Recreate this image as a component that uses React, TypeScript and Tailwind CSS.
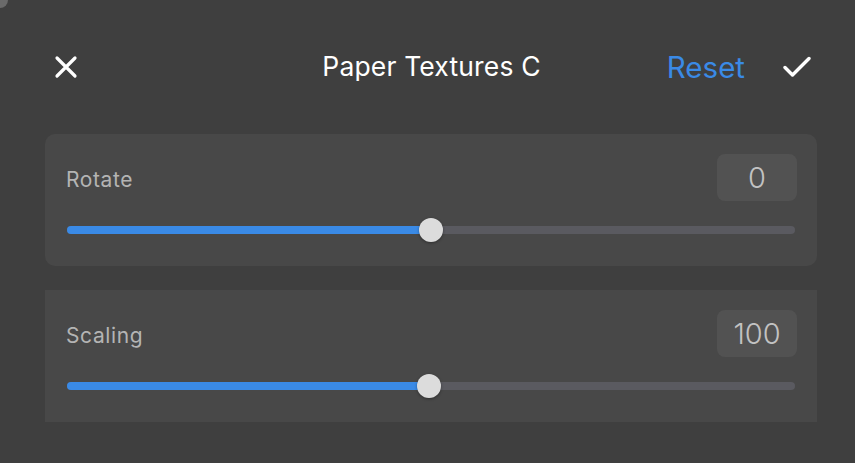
import { FC } from 'react';

type SliderCardProps = {
  label: string;
  value: number;
  percent: number;
  rounded?: boolean;
};

const SliderCard: FC<SliderCardProps> = ({ label, value, percent, rounded }) => {
  return (
    <div className={`bg-[#484848] pt-5 pb-6 pl-[21px] pr-5 ${rounded ? 'rounded-[10px]' : ''}`}>
      <div className="flex items-center justify-between h-[47px]">
        <div className="text-[21px] text-[#b4b4b4] tracking-[0.6px] pt-1">{label}</div>
        <div className="w-20 h-[47px] rounded-lg bg-[#525252] flex items-center justify-center text-[29px] font-light text-[#c2c2c2]">
          {value}
        </div>
      </div>
      <div className="relative h-6 mt-[17px] ml-px mr-0.5 flex items-center">
        <div className="w-full h-2 rounded-full bg-[#5a5a60]" />
        <div
          className="absolute left-0 h-2 rounded-full bg-[#3a8ae6]"
          style={{ width: `${percent}%` }}
        />
        <div
          className="absolute w-6 h-6 -ml-3 rounded-full bg-[#dcdcdc] shadow-[0_1px_3px_rgba(0,0,0,0.35)]"
          style={{ left: `${percent}%` }}
        />
      </div>
    </div>
  );
};

export default function App() {
  return (
    <div
      className="w-[855px] h-[463px] bg-[#3f3f3f] overflow-hidden relative"
      style={{ fontFamily: 'Inter, "Noto Sans", sans-serif' }}
    >
      <div className="absolute top-0 left-0 w-2 h-2 bg-[#6a6a6a] rounded-br-[8px]" />
      <div className="grid grid-cols-[1fr_auto_1fr] items-center h-[134px] pl-[52px] pr-[44px]">
        <button className="w-7 h-7 flex items-center justify-center">
          <svg width="24" height="24" viewBox="0 0 24 24" fill="none" stroke="white" strokeWidth="3.2" strokeLinecap="round">
            <path d="M3 3L21 21M21 3L3 21" />
          </svg>
        </button>
        <div className="text-center text-white text-[26.5px] tracking-[0.15px]">Paper Textures C</div>
        <div className="flex items-center justify-end">
          <div className="text-[29.5px] text-[#3a8ae6] mr-[38px]">Reset</div>
          <svg width="28" height="22" viewBox="0 0 28 22" fill="none" stroke="white" strokeWidth="3.4" strokeLinecap="round" strokeLinejoin="round">
            <path d="M2 11.5L9.5 19L26 2.5" />
          </svg>
        </div>
      </div>
      <div className="flex flex-col gap-6 pl-[45px] w-[817px]">
        <SliderCard label="Rotate" value={0} percent={50} rounded />
        <SliderCard label="Scaling" value={100} percent={49.7} />
      </div>
    </div>
  );
}
